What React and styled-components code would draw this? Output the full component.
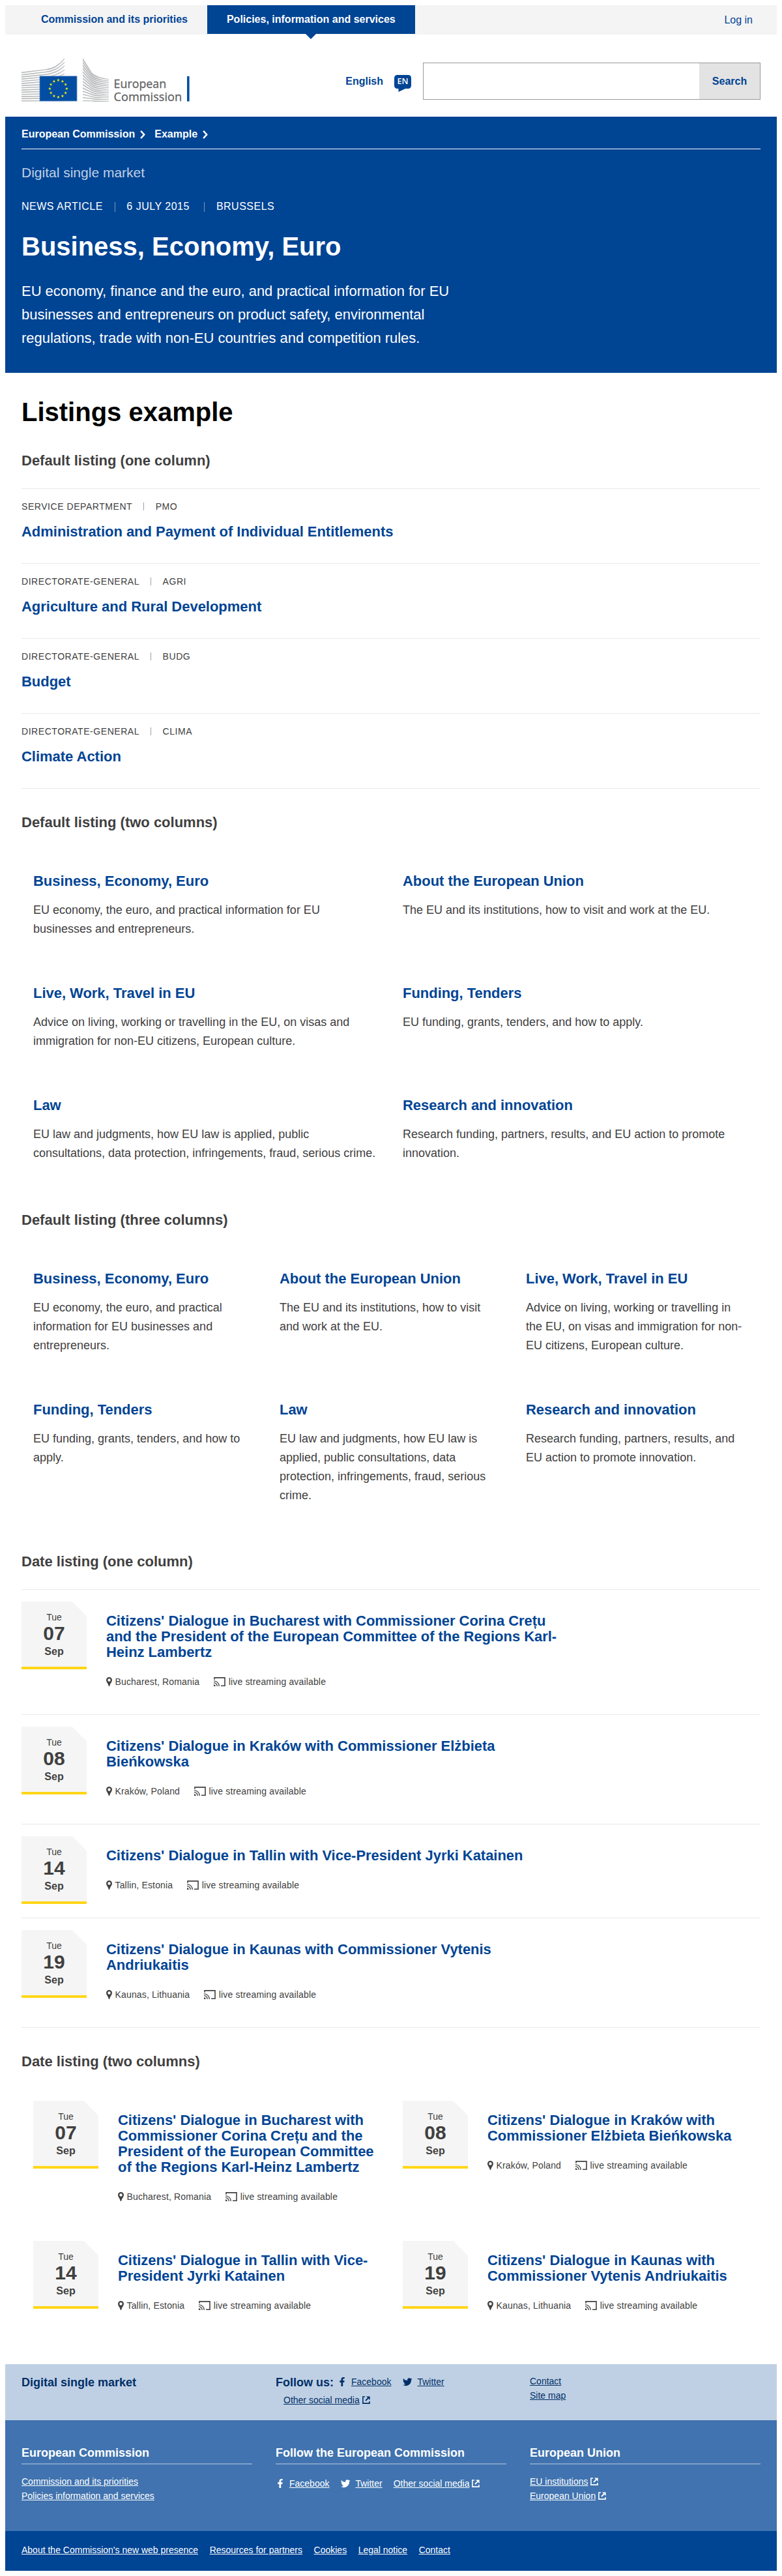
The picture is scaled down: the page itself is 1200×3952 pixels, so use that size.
import React from "react";
import styled, { createGlobalStyle } from "styled-components";
import { FaFacebookF, FaTwitter } from "react-icons/fa";

const BLUE = "#004494";
const NAVY = "#002f67";
const TEXT = "#404040";

const GlobalStyle = createGlobalStyle`
  *, *::before, *::after { box-sizing: border-box; }
  body {
    margin: 8px;
    background: #fff;
    color: ${TEXT};
    font-family: "Liberation Sans", Arial, sans-serif;
    font-size: 16px;
    line-height: 24px;
  }
  h1, h2, h3, p, ul { margin: 0; padding: 0; }
  ul { list-style: none; }
`;

/* ---------- Top bar ---------- */

const TopBar = styled.nav`
  display: flex;
  justify-content: space-between;
  align-items: flex-start;
  height: 45px;
  padding: 0 25px;
  background: #f4f4f4;
`;

const Tabs = styled.div`
  display: flex;
`;

const Tab = styled.a`
  position: relative;
  height: 44px;
  padding: 10px 30px;
  font-weight: bold;
  white-space: nowrap;
  color: ${(p) => (p.$active ? "#fff" : BLUE)};
  background: ${(p) => (p.$active ? BLUE : "transparent")};

  &::after {
    content: "";
    display: ${(p) => (p.$active ? "block" : "none")};
    position: absolute;
    top: 100%;
    left: 50%;
    margin-left: -8px;
    border: 8px solid transparent;
    border-top-color: ${BLUE};
    border-bottom: 0;
  }
`;

const LogIn = styled.a`
  padding: 11px 12px 0 0;
  color: ${BLUE};
`;

/* ---------- Site header ---------- */

const SiteHeader = styled.header`
  display: flex;
  justify-content: space-between;
  align-items: flex-start;
  height: 126px;
  padding: 36px 25px 0;
`;

const Tools = styled.div`
  display: flex;
  align-items: center;
  height: 57px;
  margin-top: 7px;
`;

const Language = styled.a`
  display: flex;
  align-items: center;
  gap: 17px;
  margin-right: 18px;
  color: ${BLUE};
  font-weight: bold;

  svg { margin-top: 7px; }
`;

const SearchForm = styled.form`
  display: flex;
  width: 518px;
  height: 57px;
  border: 1px solid #999;
`;

const SearchInput = styled.input`
  flex: 1;
  min-width: 0;
  border: 0;
  padding: 0 15px;
  font: inherit;
  background: #fff;
`;

const SearchButton = styled.button`
  width: 93px;
  border: 0;
  padding: 0;
  background: #e3e3e3;
  color: ${BLUE};
  font: inherit;
  font-weight: bold;
`;

/* ---------- Hero ---------- */

const Hero = styled.section`
  height: 393px;
  padding: 0 25px;
  background: ${BLUE};
  color: #fff;
`;

const Breadcrumb = styled.ul`
  display: flex;
  padding: 15px 0 10px;
  border-bottom: 1px solid #fff;
  font-weight: bold;
`;

const Crumb = styled.li`
  display: flex;
  align-items: center;

  svg { margin: 0 14px 0 8px; }
`;

const SiteName = styled.div`
  margin-top: 24px;
  font-size: 21px;
  color: #bfd0e4;
`;

const MetaList = styled.ul`
  display: flex;
  align-items: center;
  text-transform: uppercase;
  letter-spacing: 0.5px;
`;

const HeroMeta = styled(MetaList)`
  margin-top: 28px;
`;

const HeroMetaItem = styled.li`
  display: flex;
  align-items: center;
  margin-right: ${(p) => p.$gap || 18}px;

  &:not(:first-child)::before {
    content: "";
    width: 1px;
    height: 15px;
    margin: 1px 17.5px 0 0;
    background: #8396ad;
  }
`;

const HeroTitle = styled.h1`
  margin-top: 25px;
  font-size: 40px;
  line-height: 48px;
`;

const HeroIntro = styled.p`
  max-width: 700px;
  margin-top: 27px;
  font-size: 22px;
  line-height: 36px;
  letter-spacing: -0.02px;
`;

/* ---------- Main ---------- */

const Main = styled.main`
  padding: 36px 25px 40px;
`;

const PageTitle = styled.h1`
  margin-bottom: 39px;
  font-size: 40px;
  line-height: 48px;
  color: #000;
`;

const Section = styled.section`
  & + & { margin-top: 40px; }
`;

const SectionTitle = styled.h3`
  margin-bottom: 30px;
  font-size: 22px;
  line-height: 24px;
`;

const ItemTitle = styled.h3`
  font-size: 22px;
  line-height: 24px;
  letter-spacing: -0.03px;
  color: ${BLUE};
`;

const RuledList = styled.ul`
  border-bottom: 1px solid #e9e9e9;
`;

const DepartmentItem = styled.li`
  padding: 17px 0 36px;
  border-top: 1px solid #e9e9e9;
`;

const DepartmentMeta = styled(MetaList)`
  margin-bottom: 17px;
  font-size: 14px;
  line-height: 20px;
  letter-spacing: 0.55px;
`;

const DepartmentMetaItem = styled.li`
  display: flex;
  align-items: center;

  &:not(:first-child)::before {
    content: "";
    width: 1px;
    height: 12px;
    margin: 0 17.5px 0 17px;
    background: #a0a0a0;
  }
`;

const Columns = styled.ul`
  display: grid;
  grid-template-columns: repeat(${(p) => p.$count}, 1fr);
`;

const TopicItem = styled.li`
  padding: 36px 18px;
`;

const TopicText = styled.p`
  margin-top: 18.4px;
  font-size: 18px;
  line-height: 28.8px;
`;

const EventItem = styled.li`
  display: flex;
  gap: 30px;
  padding: 18px ${(p) => (p.$ruled ? 0 : 18)}px 0;
  border-top: ${(p) => (p.$ruled ? "1px solid #e9e9e9" : "0")};
`;

const DateBlock = styled.div`
  flex: none;
  width: 100px;
  height: 104px;
  padding-top: 14px;
  border-bottom: 4px solid #ffd617;
  background: linear-gradient(225deg, #fff 15.5px, #f5f5f5 16px);
  text-align: center;
`;

const WeekDay = styled.div`
  font-size: 14px;
  line-height: 20px;
`;

const Day = styled.div`
  margin-top: 2px;
  font-size: 30px;
  font-weight: bold;
  line-height: 26px;
`;

const Month = styled.div`
  margin-top: 5px;
  font-weight: bold;
  line-height: 20px;
`;

const EventBody = styled.div`
  max-width: 710px;
  padding: 18px 0 40px;
`;

const EventMeta = styled.div`
  display: flex;
  align-items: center;
  margin-top: 23px;
  font-size: 14px;
  line-height: 20px;
  letter-spacing: 0.16px;
`;

const EventPlace = styled.span`
  display: flex;
  align-items: center;
  gap: 4.5px;
  margin-right: 22px;
`;

const EventStream = styled.span`
  display: flex;
  align-items: center;
  gap: 4.5px;
`;

/* ---------- Footer ---------- */

const FooterBand = styled.div`
  display: grid;
  grid-template-columns: repeat(3, 1fr);
  column-gap: 36px;
  font-size: 14px;
`;

const SiteBand = styled(FooterBand)`
  height: 86px;
  padding: 16px 25px 0;
  background: #bfd0e4;
  color: ${NAVY};
`;

const CorporateBand = styled(FooterBand)`
  height: 170px;
  padding: 38px 25px 0;
  background: #4073af;
  color: #fff;
`;

const LegalBand = styled.ul`
  display: flex;
  gap: 17.5px;
  height: 61px;
  padding: 19px 25px 0;
  background: ${BLUE};
  color: #fff;
  font-size: 14px;
  line-height: 20px;
`;

const FooterTitle = styled.h2`
  font-size: 18px;
  line-height: 24px;
`;

const RuledFooterTitle = styled(FooterTitle)`
  padding-bottom: 4px;
  border-bottom: 2px solid #80a1ca;
`;

const Link = styled.a`
  text-decoration: underline;
`;

const LinkList = styled.ul`
  margin-top: ${(p) => p.$top}px;
  line-height: 22px;
`;

const LinkRow = styled.li`
  display: flex;
  align-items: center;
  gap: 4px;
  white-space: nowrap;
`;

const FollowRow = styled.div`
  display: flex;
  align-items: baseline;
`;

const SocialRow = styled.div`
  display: flex;
  gap: 17px;
  align-items: center;
  margin: ${(p) => p.$margin};
  line-height: 20px;
  white-space: nowrap;
`;

const SocialItem = styled.span`
  display: flex;
  align-items: center;
  gap: ${(p) => p.$gap}px;
`;

const SocialIcon = styled.span`
  display: flex;
  justify-content: center;
  width: 16px;
  font-size: ${(p) => p.$size || 14}px;
`;

/* ---------- Drawings ---------- */

function starPoints(cx, cy, r) {
  const pts = [];
  for (let i = 0; i < 10; i++) {
    const rad = i % 2 ? r * 0.4 : r;
    const a = (Math.PI / 5) * i - Math.PI / 2;
    pts.push(`${(cx + rad * Math.cos(a)).toFixed(2)},${(cy + rad * Math.sin(a)).toFixed(2)}`);
  }
  return pts.join(" ");
}

function leftWing(i) {
  const y = 21.6 + i * 3.33;
  const lift = 4.4 * (1 - i / 13);
  const end = i * 5.8;
  const bend = y - lift;
  if (i > 5) {
    return `M0 ${y}L66 ${y - lift * 1.4}V${y - lift * 1.4 + 1.4}L0 ${y + 1.7}Z`;
  }
  return `M0 ${y}L37 ${bend}Q54 ${bend - 2} 66 ${end}V${end + 1.4}Q54 ${bend + 0.2} 37 ${bend + 1.4}L0 ${y + 1.7}Z`;
}

function rightWing(i) {
  const k = 1 - i / 13;
  const y = i * 5;
  const end = 32.2 + i * 2.58;
  const slope = 1.62 * k;
  const x1 = 107;
  const y1 = y + slope * 13;
  const cx = 112;
  const cy = y + slope * 18 + (1 - k) * 0.8;
  const w = 1.9 * k + 1.3;
  return `M94 ${y}L${x1} ${y1}Q${cx} ${cy} 134 ${end}V${end + 0.9}Q${cx - 0.8} ${cy + 1.8} ${x1} ${y1 + w * 0.9}L94 ${y + w}Z`;
}

function Logo() {
  const stars = Array.from({ length: 12 }, (_, i) => {
    const a = (Math.PI / 6) * i;
    return [56.4 + 13 * Math.sin(a), 47 - 13 * Math.cos(a)];
  });
  return (
    <svg width="260" height="76" viewBox="0 0 260 76" aria-label="European Commission">
      <g fill="#b8babc">
        {Array.from({ length: 14 }, (_, i) => (
          <path key={`l${i}`} d={leftWing(i)} />
        ))}
        {Array.from({ length: 14 }, (_, i) => (
          <path key={`r${i}`} d={rightWing(i)} />
        ))}
      </g>
      <rect x="27.5" y="27.3" width="58" height="39.2" fill="#7d9fd0" />
      <rect x="28.3" y="28.1" width="56.4" height="37.6" fill="#034ea2" />
      {stars.map(([x, y], i) => (
        <polygon key={i} points={starPoints(x, y, 2.5)} fill="#fff200" />
      ))}
      <g
        fill="#606164"
        stroke="#606164"
        strokeWidth="0.3"
        fontFamily="Open Sans, Noto Sans, sans-serif"
        fontSize="18.5"
      >
        <text x="141.6" y="46.3" textLength="80.5" lengthAdjust="spacingAndGlyphs">European</text>
        <text x="141.6" y="66.3" textLength="104.5" lengthAdjust="spacingAndGlyphs">Commission</text>
      </g>
      <rect x="254" y="28" width="3.6" height="38.5" fill="#034ea2" />
    </svg>
  );
}

function LanguageIcon() {
  return (
    <svg width="26" height="26" viewBox="0 0 26 26">
      <path
        d="M5 0H21Q26 0 26 5V16Q26 21 21 21H17L6.5 26V21H5Q0 21 0 16V5Q0 0 5 0Z"
        fill={BLUE}
      />
      <text
        x="4.4"
        y="14.4"
        fill="#fff"
        fontFamily="Open Sans, sans-serif"
        fontSize="12"
        fontWeight="600"
        textLength="17.2"
        lengthAdjust="spacingAndGlyphs"
      >
        EN
      </text>
    </svg>
  );
}

function Chevron() {
  return (
    <svg width="8" height="13" viewBox="0 0 8 13" fill="none" stroke="#fff" strokeWidth="2.5">
      <path d="M1.1 0.9L6.2 6.5L1.1 12.1" />
    </svg>
  );
}

function PinIcon() {
  return (
    <svg width="9" height="14" viewBox="0 0 9 14">
      <path
        fillRule="evenodd"
        fill={TEXT}
        d="M4.5 0C2 0 0 2 0 4.5C0 7.5 3 9.5 3.9 14H5.1C6 9.5 9 7.5 9 4.5C9 2 7 0 4.5 0ZM4.5 2.3A2.2 2.2 0 1 1 4.5 6.7A2.2 2.2 0 1 1 4.5 2.3Z"
      />
    </svg>
  );
}

function CastIcon() {
  return (
    <svg width="18" height="14" viewBox="0 0 18 14" fill="none" stroke={TEXT}>
      <path d="M1 3.8V0.9H17V13.2H11" strokeWidth="1.6" />
      <path d="M0 5.8A8 8 0 0 1 8.2 14" strokeWidth="1.3" />
      <path d="M0 8.7A5.2 5.2 0 0 1 5.3 14" strokeWidth="1.3" />
      <path d="M0 11.3A2.7 2.7 0 0 1 2.7 14H0Z" fill={TEXT} stroke="none" />
    </svg>
  );
}

function ExternalIcon() {
  return (
    <svg width="12" height="12" viewBox="0 0 12 12" fill="none" stroke="currentColor">
      <path d="M4 1H0.9V11.1H11V8" strokeWidth="1.6" />
      <path d="M5 7L9.2 2.8" strokeWidth="1.9" />
      <path d="M6 0.4H11.6V6Z" fill="currentColor" stroke="none" />
    </svg>
  );
}

/* ---------- Content ---------- */

const departments = [
  ["Service department", "PMO", "Administration and Payment of Individual Entitlements"],
  ["Directorate-General", "AGRI", "Agriculture and Rural Development"],
  ["Directorate-General", "BUDG", "Budget"],
  ["Directorate-General", "CLIMA", "Climate Action"],
];

const topics = [
  ["Business, Economy, Euro", "EU economy, the euro, and practical information for EU businesses and entrepreneurs."],
  ["About the European Union", "The EU and its institutions, how to visit and work at the EU."],
  ["Live, Work, Travel in EU", "Advice on living, working or travelling in the EU, on visas and immigration for non-EU citizens, European culture."],
  ["Funding, Tenders", "EU funding, grants, tenders, and how to apply."],
  ["Law", "EU law and judgments, how EU law is applied, public consultations, data protection, infringements, fraud, serious crime."],
  ["Research and innovation", "Research funding, partners, results, and EU action to promote innovation."],
];

const events = [
  ["07", "Citizens' Dialogue in Bucharest with Commissioner Corina Crețu and the President of the European Committee of the Regions Karl-Heinz Lambertz", "Bucharest, Romania"],
  ["08", "Citizens' Dialogue in Kraków with Commissioner Elżbieta Bieńkowska", "Kraków, Poland"],
  ["14", "Citizens' Dialogue in Tallin with Vice-President Jyrki Katainen", "Tallin, Estonia"],
  ["19", "Citizens' Dialogue in Kaunas with Commissioner Vytenis Andriukaitis", "Kaunas, Lithuania"],
];

const legalLinks = [
  "About the Commission's new web presence",
  "Resources for partners",
  "Cookies",
  "Legal notice",
  "Contact",
];

function Topics({ columns }) {
  return (
    <Columns $count={columns}>
      {topics.map(([title, text]) => (
        <TopicItem key={title}>
          <ItemTitle>{title}</ItemTitle>
          <TopicText>{text}</TopicText>
        </TopicItem>
      ))}
    </Columns>
  );
}

function Events({ ruled }) {
  return events.map(([day, title, place]) => (
    <EventItem key={day} $ruled={ruled}>
      <DateBlock>
        <WeekDay>Tue</WeekDay>
        <Day>{day}</Day>
        <Month>Sep</Month>
      </DateBlock>
      <EventBody>
        <ItemTitle>{title}</ItemTitle>
        <EventMeta>
          <EventPlace>
            <PinIcon />
            {place}
          </EventPlace>
          <EventStream>
            <CastIcon />
            live streaming available
          </EventStream>
        </EventMeta>
      </EventBody>
    </EventItem>
  ));
}

function SocialLinks() {
  return (
    <>
      <SocialItem $gap={6}>
        <SocialIcon>
          <FaFacebookF />
        </SocialIcon>
        <Link>Facebook</Link>
      </SocialItem>
      <SocialItem $gap={7}>
        <SocialIcon $size={14.5}>
          <FaTwitter />
        </SocialIcon>
        <Link>Twitter</Link>
      </SocialItem>
    </>
  );
}

function OtherSocial() {
  return (
    <SocialItem $gap={4}>
      <Link>Other social media</Link>
      <ExternalIcon />
    </SocialItem>
  );
}

export default function App() {
  return (
    <>
      <GlobalStyle />
      <TopBar>
        <Tabs>
          <Tab>Commission and its priorities</Tab>
          <Tab $active>Policies, information and services</Tab>
        </Tabs>
        <LogIn>Log in</LogIn>
      </TopBar>

      <SiteHeader>
        <Logo />
        <Tools>
          <Language>
            English
            <LanguageIcon />
          </Language>
          <SearchForm>
            <SearchInput aria-label="Search" />
            <SearchButton type="button">Search</SearchButton>
          </SearchForm>
        </Tools>
      </SiteHeader>

      <Hero>
        <Breadcrumb>
          {["European Commission", "Example"].map((name) => (
            <Crumb key={name}>
              {name}
              <Chevron />
            </Crumb>
          ))}
        </Breadcrumb>
        <SiteName>Digital single market</SiteName>
        <HeroMeta>
          <HeroMetaItem>News article</HeroMetaItem>
          <HeroMetaItem $gap={22.5}>6 July 2015</HeroMetaItem>
          <HeroMetaItem>Brussels</HeroMetaItem>
        </HeroMeta>
        <HeroTitle>Business, Economy, Euro</HeroTitle>
        <HeroIntro>
          EU economy, finance and the euro, and practical information for EU businesses and
          entrepreneurs on product safety, environmental regulations, trade with non-EU countries
          and competition rules.
        </HeroIntro>
      </Hero>

      <Main>
        <PageTitle>Listings example</PageTitle>

        <Section>
          <SectionTitle>Default listing (one column)</SectionTitle>
          <RuledList>
            {departments.map(([kind, code, name]) => (
              <DepartmentItem key={code}>
                <DepartmentMeta>
                  <DepartmentMetaItem>{kind}</DepartmentMetaItem>
                  <DepartmentMetaItem>{code}</DepartmentMetaItem>
                </DepartmentMeta>
                <ItemTitle>{name}</ItemTitle>
              </DepartmentItem>
            ))}
          </RuledList>
        </Section>

        <Section>
          <SectionTitle>Default listing (two columns)</SectionTitle>
          <Topics columns={2} />
        </Section>

        <Section>
          <SectionTitle>Default listing (three columns)</SectionTitle>
          <Topics columns={3} />
        </Section>

        <Section>
          <SectionTitle>Date listing (one column)</SectionTitle>
          <RuledList>
            <Events ruled />
          </RuledList>
        </Section>

        <Section>
          <SectionTitle>Date listing (two columns)</SectionTitle>
          <Columns $count={2}>
            <Events />
          </Columns>
        </Section>
      </Main>

      <footer>
        <SiteBand>
          <FooterTitle>Digital single market</FooterTitle>
          <div>
            <FollowRow>
              <FooterTitle>Follow us:</FooterTitle>
              <SocialRow $margin="0 0 0 5px">
                <SocialLinks />
              </SocialRow>
            </FollowRow>
            <SocialRow $margin="5px 0 0 12px">
              <OtherSocial />
            </SocialRow>
          </div>
          <LinkList $top={-1}>
            <LinkRow><Link>Contact</Link></LinkRow>
            <LinkRow><Link>Site map</Link></LinkRow>
          </LinkList>
        </SiteBand>

        <CorporateBand>
          <div>
            <RuledFooterTitle>European Commission</RuledFooterTitle>
            <LinkList $top={15}>
              <LinkRow><Link>Commission and its priorities</Link></LinkRow>
              <LinkRow><Link>Policies information and services</Link></LinkRow>
            </LinkList>
          </div>
          <div>
            <RuledFooterTitle>Follow the European Commission</RuledFooterTitle>
            <SocialRow $margin="19px 0 0 -1px">
              <SocialLinks />
              <OtherSocial />
            </SocialRow>
          </div>
          <div>
            <RuledFooterTitle>European Union</RuledFooterTitle>
            <LinkList $top={15}>
              <LinkRow><Link>EU institutions</Link><ExternalIcon /></LinkRow>
              <LinkRow><Link>European Union</Link><ExternalIcon /></LinkRow>
            </LinkList>
          </div>
        </CorporateBand>

        <LegalBand>
          {legalLinks.map((label) => (
            <li key={label}><Link>{label}</Link></li>
          ))}
        </LegalBand>
      </footer>
    </>
  );
}
